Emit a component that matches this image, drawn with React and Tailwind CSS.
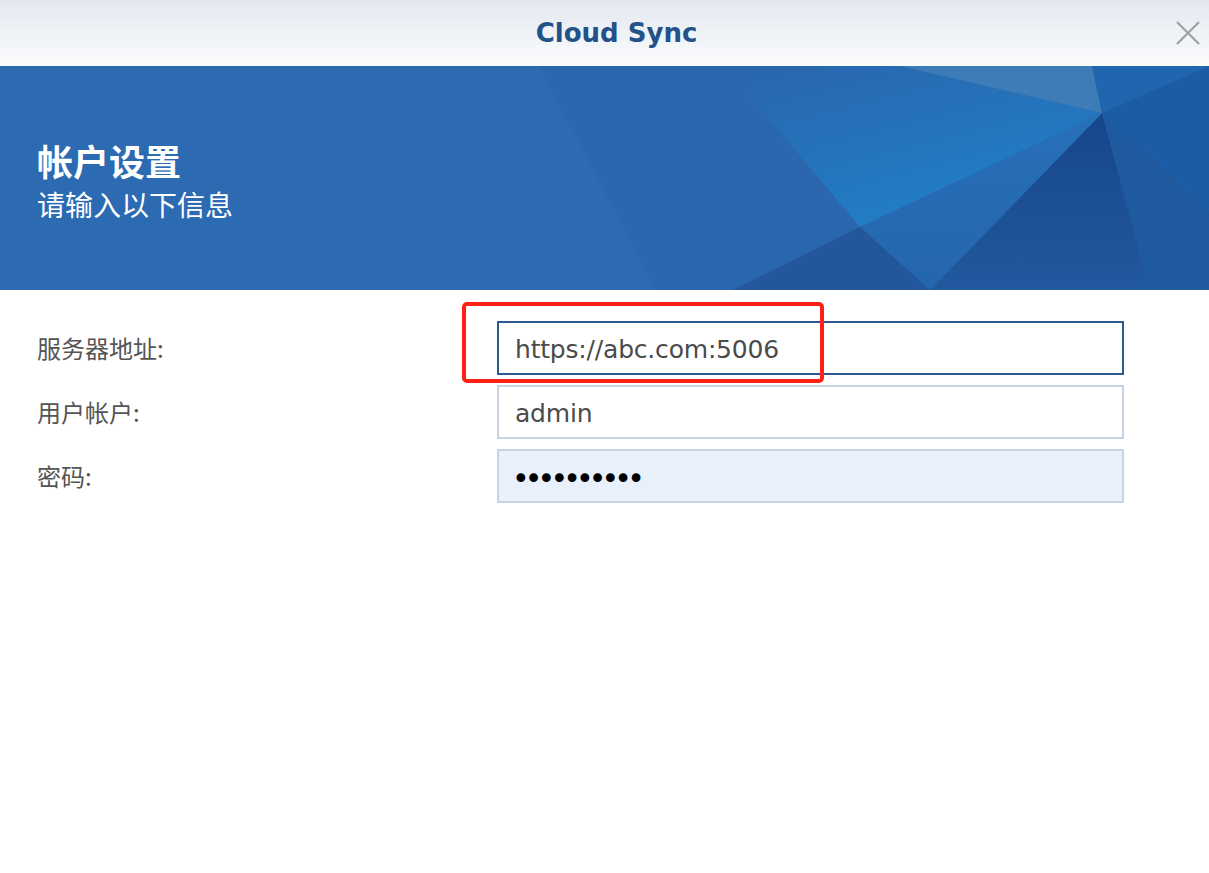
function BannerArt() {
  return (
    <svg
      className="absolute inset-0 h-full w-full"
      viewBox="0 0 1209 224"
      preserveAspectRatio="none"
    >
      <defs>
        <linearGradient id="mid" x1="0" y1="0" x2="0.6" y2="1">
          <stop offset="0" stopColor="#2965ac" />
          <stop offset="1" stopColor="#2180c8" />
        </linearGradient>
        <linearGradient id="dark" x1="0" y1="0" x2="0" y2="1">
          <stop offset="0" stopColor="#16468b" />
          <stop offset="1" stopColor="#22589d" />
        </linearGradient>
        <linearGradient id="low" x1="0" y1="0" x2="0" y2="1">
          <stop offset="0" stopColor="#2770b8" />
          <stop offset="1" stopColor="#2466ad" />
        </linearGradient>
      </defs>
      <rect width="1209" height="224" fill="#2c6ab2" />
      <polygon points="540,0 725,0 860,161 733,224 655,224" fill="#2b67ae" />
      <polygon points="725,0 900,0 1102,47 860,161" fill="url(#mid)" />
      <polygon points="900,0 1092,0 1102,47" fill="#3e7cb8" />
      <polygon points="1092,0 1209,0 1102,47" fill="#1f66ae" />
      <polygon points="1209,0 1209,144 1102,47" fill="#1c5ca4" />
      <polygon points="1102,47 1209,144 1209,224 1150,224" fill="#1f5a9f" />
      <polygon points="1102,47 1150,224 930,224" fill="url(#dark)" />
      <polygon points="1102,47 930,224 860,161" fill="url(#low)" />
      <polygon points="860,161 930,224 733,224" fill="#24569b" />
    </svg>
  )
}

const fields = [
  { label: '服务器地址:', value: 'https://abc.com:5006', focused: true },
  { label: '用户帐户:', value: 'admin' },
  { label: '密码:', value: '••••••••••', password: true },
]

export default function App() {
  return (
    <div className="relative min-h-[873px] w-[1209px] bg-white font-['Noto_Sans_CJK_SC',sans-serif]">
      {/* title bar */}
      <div className="relative flex h-[66px] items-center justify-center bg-gradient-to-b from-[#e3e8f0] to-[#fbfcfd] pl-[24px]">
        <span className="font-['DejaVu_Sans',sans-serif] text-[26px] font-bold text-[#23518a]">
          Cloud Sync
        </span>
        <button className="absolute right-[9px] top-[21px]">
          <svg width="24" height="24" viewBox="0 0 24 24">
            <path d="M1 1L23 23M23 1L1 23" stroke="#a0a0a0" strokeWidth="2.2" />
          </svg>
        </button>
      </div>

      {/* banner */}
      <div className="relative h-[224px] overflow-hidden">
        <BannerArt />
        <div className="relative flex flex-col gap-[6px] pl-[37px] pt-[74px] text-white">
          <div className="text-[36px] font-bold leading-[40px]">帐户设置</div>
          <div className="text-[28px] leading-[36px]">请输入以下信息</div>
        </div>
      </div>

      {/* form */}
      <div className="flex flex-col gap-[10px] pl-[37px] pt-[31px]">
        {fields.map((f) => (
          <div key={f.label} className="flex items-center">
            <div className="w-[460px] text-[24px] text-[#555555]">{f.label}</div>
            <div
              className={`flex h-[54px] w-[627px] items-center border-2 ${
                f.focused
                  ? 'border-[#2c5a90] bg-white pl-[16px]'
                  : f.password
                  ? 'border-[#c8d3e0] bg-[#e8f0fc] pl-[13px]'
                  : 'border-[#c8d3e0] bg-white pl-[16px]'
              }`}
            >
              {f.password ? (
                <span className="mt-[6px] font-['DejaVu_Sans',sans-serif] text-[30px] leading-[30px] tracking-[-4.9px] text-black">
                  {f.value}
                </span>
              ) : (
                <span className="pt-[3px] font-['DejaVu_Sans',sans-serif] text-[25px] tracking-[-0.2px] text-[#4b4b4b]">
                  {f.value}
                </span>
              )}
            </div>
          </div>
        ))}
      </div>

      {/* annotation */}
      <div className="absolute left-[462px] top-[302px] h-[81px] w-[362px] rounded-[5px] border-4 border-[#ff2016]" />
    </div>
  )
}
